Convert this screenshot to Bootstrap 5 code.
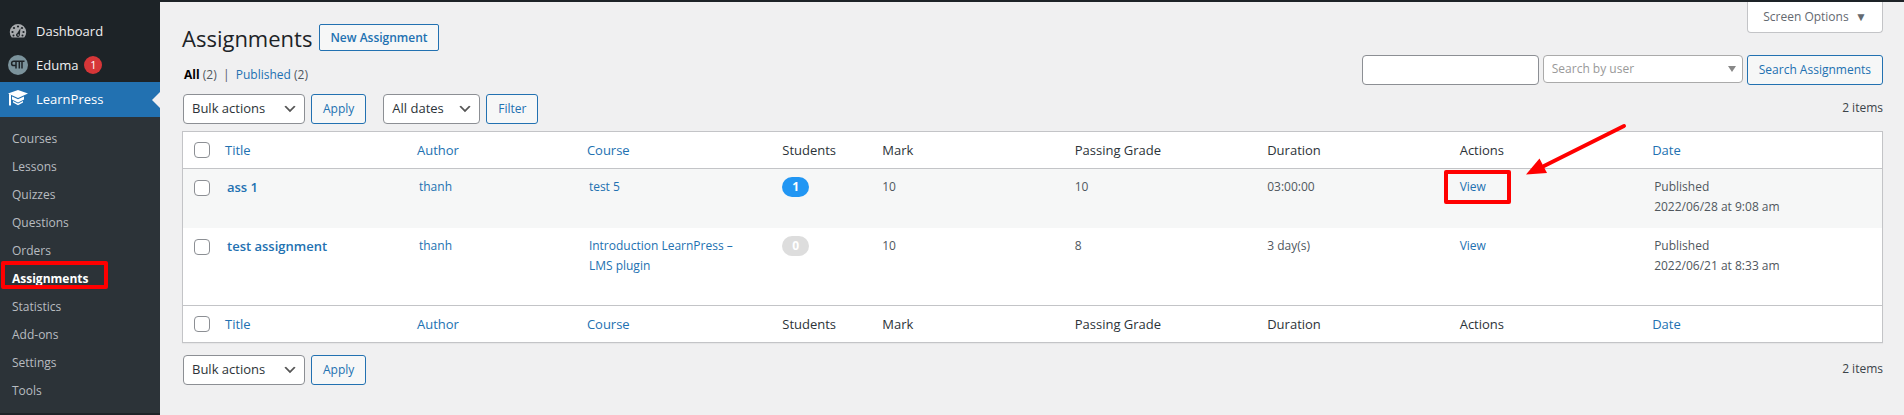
<!DOCTYPE html>
<html lang="en">
<head>
<meta charset="utf-8">
<meta name="viewport" content="width=device-width, initial-scale=1">
<title>Assignments</title>
<link href="https://cdn.jsdelivr.net/npm/bootstrap@5.3.0/dist/css/bootstrap.min.css" rel="stylesheet">
<style>
  :root { --wp-blue: #2271b1; --wp-dark: #1d2327; --wp-line: #c3c4c7; --wp-field: #8c8f94; }
  body { font: 13px/20px "Open Sans", "Noto Sans", sans-serif; color: #3c434a; background: #f0f0f1; border-top: 2px solid var(--wp-dark); }
  a { color: var(--wp-blue); text-decoration: none; }
  .page-shell { min-height: calc(100vh - 2px); }
  .side-menu { width: 160px; background: var(--wp-dark); padding-top: 12px; font-size: 13px; }
  .side-menu .main-link { height: 34px; gap: 8px; padding-left: 8px; color: #f0f0f1; }
  .side-menu .main-link svg { width: 20px; height: 20px; }
  .side-menu .main-link.current { height: 35px; padding-bottom: 1px; background: var(--wp-blue); color: #fff; }
  .main-link.current::after { content: ""; position: absolute; right: 0; top: 50%; margin-top: -8px; border: 8px solid transparent; border-left: 0; border-right-color: #f0f0f1; }
  .count { width: 18px; height: 18px; line-height: 18px; font-size: 11px; background: #d63638; color: #fff; margin-left: -2px; }
  .sub-menu { background: #2c3338; padding: 8px 0; }
  .sub-menu a { height: 28px; padding: 4px 12px; color: #b8bcc0; font-size: 12px; }
  .sub-menu a.active { color: #fff; font-weight: 700; }
  .marked::after { content: ""; position: absolute; border: 4px solid #f00; border-radius: 2px; pointer-events: none; }
  .sub-menu .marked::after { left: 1px; top: -4px; width: 107px; height: 28px; }
  .content-area { padding: 0 21px 0 22px; }
  .title-row { gap: 7px; padding-top: 22px; }
  .screen-options { width: 136px; height: 31px; border: 1px solid var(--wp-line); border-top: 0; border-radius: 0 0 4px 4px; background: #fff; color: #646970; }
  h1 { font-size: 22px; line-height: 26px; font-weight: 400; color: var(--wp-dark); }
  .wp-btn { --bs-btn-color: var(--wp-blue); --bs-btn-border-color: var(--wp-blue); --bs-btn-bg: #f6f7f7; --bs-btn-border-radius: 3px; --bs-btn-padding-y: 0; --bs-btn-padding-x: 11px; --bs-btn-font-size: 12px; --bs-btn-hover-color: #0a4b78; --bs-btn-hover-bg: #f0f0f1; height: 30px; }
  .wp-btn.title-btn { height: 27px; --bs-btn-font-weight: 600; --bs-btn-padding-x: 10px; --bs-btn-border-radius: 2px; }
  .form-select, .form-control { height: 30px; font-size: 13px; padding: 0 24px 0 8px; border-color: var(--wp-field); border-radius: 4px; color: #2c3338; }
  .form-select { background-position: right 6px center; background-size: 16px;
    background-image: url("data:image/svg+xml,%3Csvg xmlns='http://www.w3.org/2000/svg' viewBox='0 0 20 20'%3E%3Cpath d='M5 6l5 5 5-5 2 1-7 7-7-7 2-1z' fill='%23555'/%3E%3C/svg%3E"); }
  .form-select.user-select-box { height: 28px; width: 200px; font-size: 12px; color: #999; border-color: #aaa; background-position: right 5px center; background-size: 10px;
    background-image: url("data:image/svg+xml,%3Csvg xmlns='http://www.w3.org/2000/svg' viewBox='0 0 10 10'%3E%3Cpath d='M1 2h8L5 8z' fill='%23888'/%3E%3C/svg%3E"); }
  .form-control.search-box { width: 177px; }
  .bulk { width: 122px; } .dates { width: 97px; }
  .search-row { padding-top: 4px; }
  .filter-row { padding: 9px 0 7px; }
  .tools { gap: 6px; padding-left: 1px; }
  .tools .dates { margin-left: 11px; }
  .views { font-size: 12px; color: #50575e; padding-left: 2px; }
  .small-text { font-size: 12px; }
  .list-grid { table-layout: fixed; border: 1px solid var(--wp-line); background: #fff; box-shadow: 0 1px 1px rgba(0,0,0,.04); border-collapse: separate; border-spacing: 0; font-size: 12px; }
  .col-check { width: 34px; } .col-title { width: 11.3%; } .col-author { width: 10%; } .col-course { width: 11.5%; } .col-students { width: 100px; } .col-date { width: 14%; }
  .list-grid th { font-size: 13px; font-weight: 400; height: 37px; padding: 8px; color: #2c3338; vertical-align: middle; }
  .list-grid thead th { border-bottom: 1px solid var(--wp-line); }
  .list-grid tfoot th { border-top: 1px solid var(--wp-line); }
  .list-grid td { padding: 8px; vertical-align: top; color: #50575e; }
  .list-grid td.inset { padding-left: 10px; }
  .list-grid td.course { padding-right: 32px; }
  .list-grid td.check { padding: 11px 0 0 11px; } .list-grid th.check { padding: 0 0 0 11px; }
  .list-grid .row-link { font-size: 13px; font-weight: 600; }
  .check .form-check-input { width: 16px; height: 16px; margin: 0; display: block; border: 1px solid var(--wp-field); border-radius: 4px; }
  .row-a { height: 59px; background: #f6f7f7; } .row-b { height: 77px; }
  .pill { display: block; width: 27px; height: 20px; line-height: 20px; border-radius: 10px; text-align: center; font-weight: 700; color: #fff; background: #ddd; }
  .pill.on { background: #2196f3; }
  td.marked::after { left: -8px; top: 1px; width: 67px; height: 34px; }
  .pointer { position: absolute; left: 72px; top: -46px; pointer-events: none; }
</style>
</head>
<body>
<div class="page-shell d-flex align-items-stretch">
  <nav class="side-menu flex-shrink-0" aria-label="Admin menu">
    <a href="#" class="main-link d-flex align-items-center">
      <svg viewBox="0 0 20 20"><path fill="#a7aaad" d="M3.800 16.500h12.400a8.200 8.200 0 1 0-12.400 0z"/><g fill="#1d2327"><circle cx="10" cy="5.500" r="1.100"/><circle cx="6" cy="7" r="1.100"/><circle cx="14" cy="7" r="1.100"/><circle cx="4.500" cy="11" r="1.100"/><circle cx="15.500" cy="11" r="1.100"/><circle cx="5.500" cy="14.500" r="1"/><circle cx="14.500" cy="14.500" r="1"/><path d="M12.500 7l-.7 7.200a1.900 1.900 0 1 1-2.600-1.900z"/></g><circle cx="10.200" cy="14" r=".8" fill="#a7aaad"/></svg>
      <span>Dashboard</span></a>
    <a href="#" class="main-link d-flex align-items-center">
      <svg viewBox="0 0 20 20"><circle cx="10" cy="10" r="10" fill="#7b939c"/><path d="M9 6.200H5.800a2.200 2.200 0 0 0 0 4.400H8M8 6.200v7.300M9 6.200h7.500M11.300 6.200v7.300M14 6.200v7.300" fill="none" stroke="#1d2327" stroke-width="1.500"/></svg>
      <span>Eduma</span><span class="count rounded-circle text-center">1</span></a>
    <a href="#" class="main-link current d-flex align-items-center position-relative">
      <svg viewBox="0 0 20 20" fill="#fff"><path d="M0 4.500L10 1l10 3.500L10 9zM1 5l2 1v10.500H1zM4 7.500l6 2.800 6-2.800v3l-6 3-6-3zM5 12l5 2.500 5-2.500v1.500l-5 2.700-5-2.700z"/></svg>
      <span>LearnPress</span></a>
    <div class="sub-menu">
      <a href="#" class="d-block">Courses</a>
      <a href="#" class="d-block">Lessons</a>
      <a href="#" class="d-block">Quizzes</a>
      <a href="#" class="d-block">Questions</a>
      <a href="#" class="d-block">Orders</a>
      <a href="#" class="d-block active marked position-relative">Assignments</a>
      <a href="#" class="d-block">Statistics</a>
      <a href="#" class="d-block">Add-ons</a>
      <a href="#" class="d-block">Settings</a>
      <a href="#" class="d-block">Tools</a>
    </div>
  </nav>

  <main class="content-area flex-grow-1">
    <div class="d-flex justify-content-between">
      <div class="title-row d-flex align-items-center">
        <h1 class="m-0">Assignments</h1>
        <a href="#" class="btn wp-btn title-btn d-flex align-items-center">New Assignment</a>
      </div>
      <button type="button" class="screen-options small-text">Screen Options &nbsp;▼</button>
    </div>

    <div class="search-row d-flex justify-content-between align-items-end">
      <div class="views">
        <a href="#" class="fw-bold text-black">All</a> (2) &nbsp;|&nbsp; <a href="#">Published</a> (2)
      </div>
      <form class="d-flex gap-1 align-items-start">
        <input type="search" class="form-control search-box" aria-label="Search assignments">
        <select class="form-select user-select-box" aria-label="Search by user"><option>Search by user</option></select>
        <button type="button" class="btn wp-btn">Search Assignments</button>
      </form>
    </div>

    <div class="filter-row d-flex justify-content-between">
      <div class="d-flex tools">
        <select class="form-select bulk" aria-label="Bulk actions"><option>Bulk actions</option></select>
        <button type="button" class="btn wp-btn">Apply</button>
        <select class="form-select dates" aria-label="Filter by date"><option>All dates</option></select>
        <button type="button" class="btn wp-btn">Filter</button>
      </div>
      <span class="small-text pt-1">2 items</span>
    </div>

    <table class="list-grid w-100">
      <colgroup><col class="col-check"><col class="col-title"><col class="col-author"><col class="col-course"><col class="col-students"><col><col><col><col><col class="col-date"></colgroup>
      <thead>
        <tr>
          <th class="check"><input type="checkbox" class="form-check-input" aria-label="Select all"></th>
          <th><a href="#">Title</a></th><th><a href="#">Author</a></th><th><a href="#">Course</a></th>
          <th>Students</th><th>Mark</th><th>Passing Grade</th><th>Duration</th><th>Actions</th><th><a href="#">Date</a></th>
        </tr>
      </thead>
      <tbody>
        <tr class="row-a">
          <td class="check"><input type="checkbox" class="form-check-input" aria-label="Select ass 1"></td>
          <td class="inset"><a href="#" class="row-link">ass 1</a></td>
          <td class="inset"><a href="#">thanh</a></td>
          <td class="inset course"><a href="#">test 5</a></td>
          <td><span class="pill on">1</span></td>
          <td>10</td><td>10</td><td>03:00:00</td>
          <td class="marked position-relative"><a href="#">View</a>
            <svg class="pointer" width="104" height="54" viewBox="0 0 104 54"><path d="M100 3L20 43" stroke="#f00" stroke-width="4" stroke-linecap="round"/><path d="M2 51.500L15.500 35.500 23 50z" fill="#f00"/></svg>
          </td>
          <td class="inset">Published<br>2022/06/28 at 9:08 am</td>
        </tr>
        <tr class="row-b">
          <td class="check"><input type="checkbox" class="form-check-input" aria-label="Select test assignment"></td>
          <td class="inset"><a href="#" class="row-link">test assignment</a></td>
          <td class="inset"><a href="#">thanh</a></td>
          <td class="inset course"><a href="#">Introduction LearnPress – LMS plugin</a></td>
          <td><span class="pill">0</span></td>
          <td>10</td><td>8</td><td>3 day(s)</td>
          <td><a href="#">View</a></td>
          <td class="inset">Published<br>2022/06/21 at 8:33 am</td>
        </tr>
      </tbody>
      <tfoot>
        <tr>
          <th class="check"><input type="checkbox" class="form-check-input" aria-label="Select all"></th>
          <th><a href="#">Title</a></th><th><a href="#">Author</a></th><th><a href="#">Course</a></th>
          <th>Students</th><th>Mark</th><th>Passing Grade</th><th>Duration</th><th>Actions</th><th><a href="#">Date</a></th>
        </tr>
      </tfoot>
    </table>

    <div class="d-flex justify-content-between pt-2 mt-1">
      <div class="d-flex tools">
        <select class="form-select bulk" aria-label="Bulk actions"><option>Bulk actions</option></select>
        <button type="button" class="btn wp-btn">Apply</button>
      </div>
      <span class="small-text pt-1">2 items</span>
    </div>
  </main>
</div>
<script src="https://cdn.jsdelivr.net/npm/bootstrap@5.3.0/dist/js/bootstrap.bundle.min.js"></script>
</body>
</html>
